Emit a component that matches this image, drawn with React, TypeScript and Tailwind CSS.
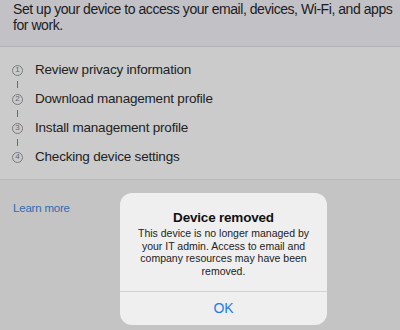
import React from 'react'

const steps = [
  'Review privacy information',
  'Download management profile',
  'Install management profile',
  'Checking device settings',
]

function StepBadge({ n }: { n: number }) {
  return (
    <span className="w-[11px] h-[11px] rounded-full border border-[#7a7a7a] flex items-center justify-center text-[8px] leading-none text-[#666] shrink-0">
      {n}
    </span>
  )
}

export default function App() {
  return (
    <div
      className="relative w-[400px] h-[330px] overflow-hidden bg-[#c4c4c4] text-[#1c1c1e]"
      style={{ fontFamily: '"Liberation Sans", Arial, sans-serif' }}
    >
      <div className="h-[47px] bg-[#c2c1c6] border-b border-[#b3b3b6] pl-[13px] pt-[1px]">
        <p className="text-[14px] leading-[16px] tracking-[-0.45px] whitespace-nowrap">
          Set up your device to access your email, devices, Wi-Fi, and apps
          <br />
          for work.
        </p>
      </div>

      <div className="h-[133px] bg-[#cbcbcb] border-b border-[#b9b9b9] pt-[14px] pl-[12px]">
        <div className="flex flex-col">
          {steps.map((s, i) => (
            <React.Fragment key={s}>
              {i > 0 && (
                <div className="h-[11px] flex items-center">
                  <span className="ml-[5px] w-px h-[7px] bg-[#6a6a6a]"></span>
                </div>
              )}
              <div className="h-[18px] flex items-center gap-[12px]">
                <StepBadge n={i + 1} />
                <span className="text-[13.5px] leading-[18px] tracking-[-0.2px] text-[#222]">{s}</span>
              </div>
            </React.Fragment>
          ))}
        </div>
      </div>

      <div className="px-[13px] pt-[15px]">
        <a href="#" className="text-[11.5px] leading-[15px] tracking-[-0.2px] text-[#2f6db0]">
          Learn more
        </a>
      </div>

      <div className="absolute left-[120px] top-[193px] w-[207px] h-[132px] rounded-[12px] bg-[#efefef] flex flex-col">
        <div className="h-[98px] px-[12px] pt-[16px] text-center">
          <div className="text-[13.5px] leading-[17px] tracking-[-0.2px] font-semibold text-[#111]">Device removed</div>
          <p className="mt-[1px] text-[10.5px] leading-[12.5px] text-[#222]">
            This device is no longer managed by your IT admin. Access to email and company resources may have been removed.
          </p>
        </div>
        <div className="border-t border-[#d2d2d2] flex-1 flex items-center justify-center">
          <span className="text-[14px] text-[#1b7cf2]">OK</span>
        </div>
      </div>
    </div>
  )
}
